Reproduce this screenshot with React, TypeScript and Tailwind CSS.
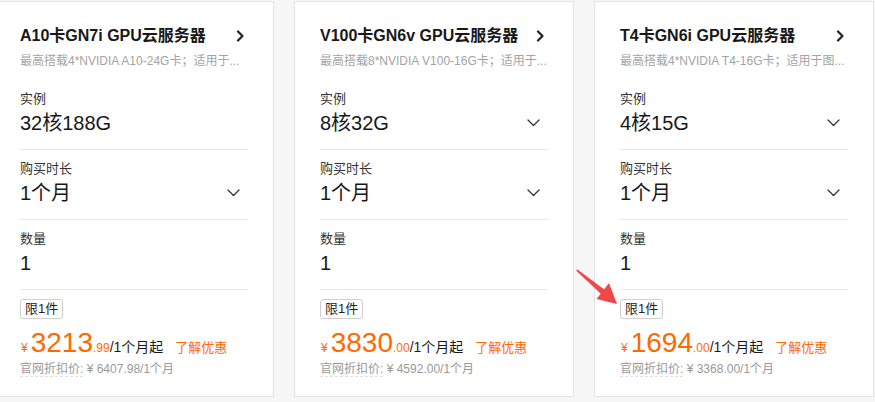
import React from 'react'

type Product = {
  title: string
  desc: string
  spec: string
  specSelect: boolean
  price: string
  cents: string
  origin: string
}

const products: Product[] = [
  {
    title: 'A10卡GN7i GPU云服务器',
    desc: '最高搭载4*NVIDIA A10-24G卡；适用于...',
    spec: '32核188G',
    specSelect: false,
    price: '3213',
    cents: '.99',
    origin: '¥ 6407.98/1个月',
  },
  {
    title: 'V100卡GN6v GPU云服务器',
    desc: '最高搭载8*NVIDIA V100-16G卡；适用于...',
    spec: '8核32G',
    specSelect: true,
    price: '3830',
    cents: '.00',
    origin: '¥ 4592.00/1个月',
  },
  {
    title: 'T4卡GN6i GPU云服务器',
    desc: '最高搭载4*NVIDIA T4-16G卡；适用于图...',
    spec: '4核15G',
    specSelect: true,
    price: '1694',
    cents: '.00',
    origin: '¥ 3368.00/1个月',
  },
]

function ChevronRight() {
  return (
    <svg width="10" height="12" viewBox="0 0 10 12" fill="none" aria-hidden="true">
      <path d="M3 1.5 L7.5 6 L3 10.5" stroke="#222" strokeWidth="2.2" strokeLinecap="round" strokeLinejoin="round" />
    </svg>
  )
}

function ChevronDown() {
  return (
    <svg width="13" height="8" viewBox="0 0 13 8" fill="none" aria-hidden="true">
      <path d="M1 1 L6.5 6.5 L12 1" stroke="#333" strokeWidth="1.3" strokeLinecap="round" strokeLinejoin="round" />
    </svg>
  )
}

function Field({ label, value, select }: { label: string; value: string; select: boolean }) {
  return (
    <div className="pb-[12px] border-b border-[#e8e8e8]">
      <div className="text-[13px] leading-[20px] text-[#333]">{label}</div>
      <div className="flex items-center justify-between h-[28px]">
        <span className="text-[20px] leading-[28px] text-[#181818]">{value}</span>
        {select && (
          <span className="pr-[8px] flex items-center">
            <ChevronDown />
          </span>
        )}
      </div>
    </div>
  )
}

function Card({ p }: { p: Product }) {
  return (
    <div className="w-[280px] h-[396px] shrink-0 bg-white border border-[#e4e4e4] px-[25px] pt-[24px]">
      <div className="flex items-center justify-between h-[20px]">
        <span className="text-[16px] leading-[20px] font-bold text-[#181818]">{p.title}</span>
        <span className="pr-[3px] flex items-center">
          <ChevronRight />
        </span>
      </div>
      <div className="mt-[6px] text-[12px] leading-[18px] text-[#a3a3a3] truncate">{p.desc}</div>

      <div className="mt-[19px]">
        <Field label="实例" value={p.spec} select={p.specSelect} />
      </div>
      <div className="pt-[9px]">
        <Field label="购买时长" value="1个月" select />
      </div>
      <div className="pt-[9px]">
        <Field label="数量" value="1" select={false} />
      </div>

      <div className="mt-[9px] flex">
        <span className="h-[20px] px-[4px] border border-[#cfcfcf] rounded-[3px] text-[13px] leading-[18px] text-[#222]">
          限1件
        </span>
      </div>

      <div className="mt-[8px] flex items-baseline h-[32px] leading-[32px] text-[#ff6a00]">
        <span className="text-[12px] ml-[1px] mr-[3px]">¥</span>
        <span className="text-[28px]">{p.price}</span>
        <span className="text-[12px]">{p.cents}</span>
        <span className="text-[14px] text-[#181818]">/1个月起</span>
        <span className="text-[13px] ml-[12px]">了解优惠</span>
      </div>
      <div className="mt-[1px] text-[12px] leading-[18px] text-[#999]">
        <span className="border-b border-dashed border-[#e0e0e0]">官网折扣价:</span> {p.origin}
      </div>
    </div>
  )
}

function Pointer() {
  return (
    <svg
      className="absolute left-[570px] top-[262px]"
      width="52"
      height="48"
      viewBox="0 0 52 48"
      aria-hidden="true"
    >
      <path d="M6 8.5 L7.5 7.5 L35 28 L31.5 32.5 Z" fill="#f04848" />
      <path d="M47 42 L26.5 37 L39 21 Z" fill="#f04848" />
    </svg>
  )
}

export default function App() {
  return (
    <div
      className="relative w-[875px] h-[402px] overflow-hidden bg-[#f7f7f7]"
      style={{ fontFamily: '"Liberation Sans", "Noto Sans CJK SC", sans-serif' }}
    >
      <div className="flex gap-[20px] ml-[-6px] pt-[1px]">
        {products.map((p) => (
          <Card key={p.title} p={p} />
        ))}
      </div>
      <Pointer />
    </div>
  )
}
